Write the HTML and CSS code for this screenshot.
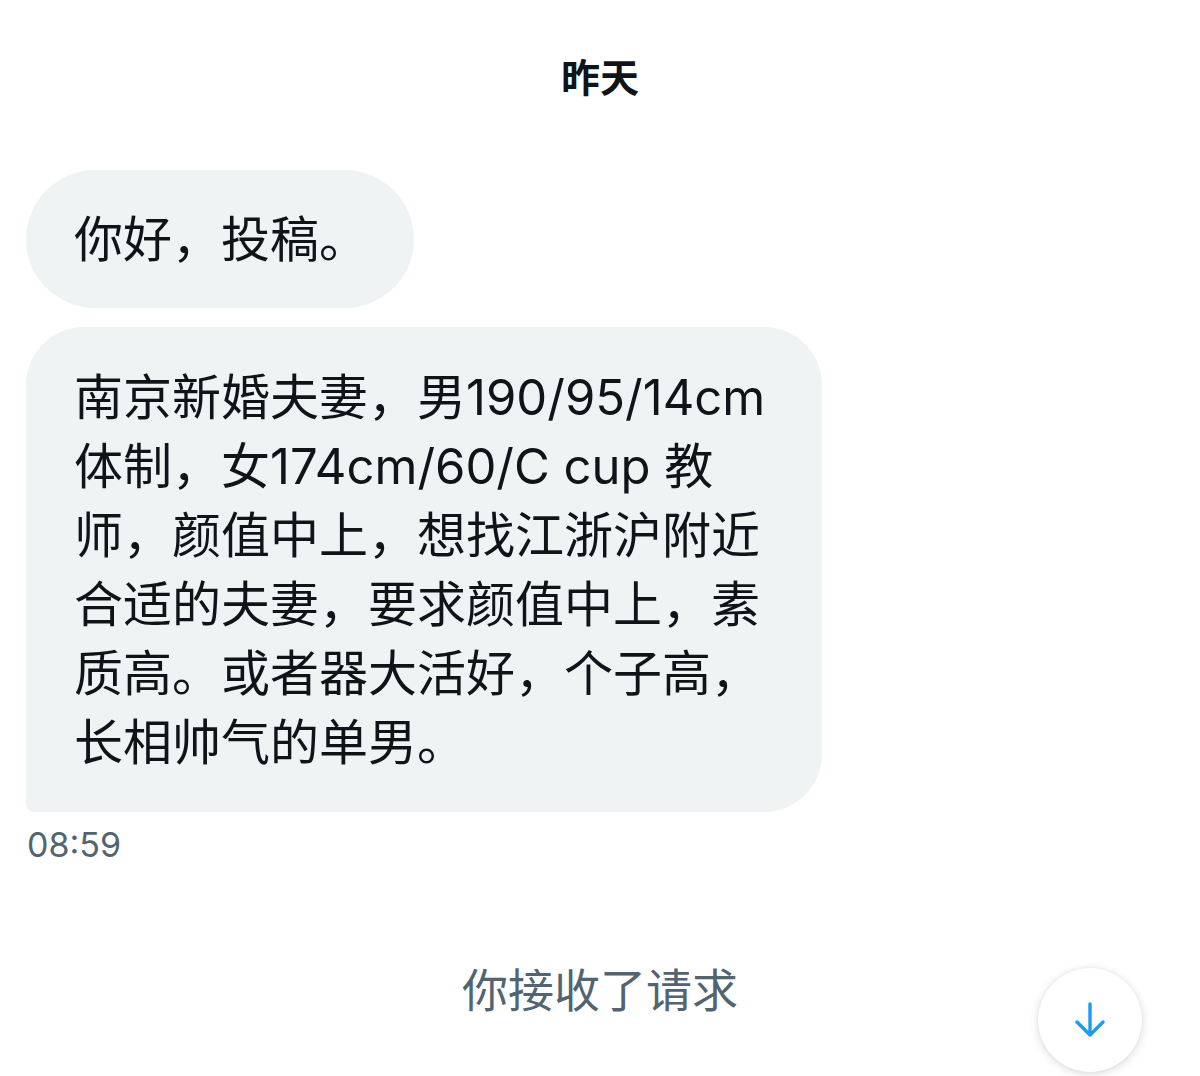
FILE: index.html
```html
<!DOCTYPE html>
<html>
    <head>
        <title>私信</title>
        <meta charset="UTF-8">
        <meta name="viewport" content="width=device-width, initial-scale=1.0">
        <link rel="stylesheet" href="styles.css">
    </head>
    <body>
        <div class="chat">
            <div class="day">昨天</div>

            <div class="thread">
                <div class="bubble short">你好，投稿。</div>
                <div class="bubble long">南京新婚夫妻，男190/95/14cm<br>体制，女174cm/60/C cup 教<br>师，颜值中上，想找江浙沪附近<br>合适的夫妻，要求颜值中上，素<br>质高。或者器大活好，个子高，<br>长相帅气的单男。</div>
                <div class="time">08:59</div>
            </div>

            <div class="notice">你接收了请求</div>
        </div>

        <button class="scroll-down">
            <svg width="34" height="38" viewBox="0 0 34 38">
                <path d="M17 3 V34 M4 21 L17 34 L30 21" fill="none" stroke="#1d9bf0" stroke-width="3.4" stroke-linecap="round" stroke-linejoin="round"/>
            </svg>
        </button>
    </body>
</html>
```

FILE: styles.css
```css
html,body{margin:0; padding:0; background:#fff;}

body{
    font-family:"Inter","Noto Sans CJK SC",sans-serif;
    color:#0f1419;
    height:1076px;
    overflow:hidden;
    position:relative;
}

.chat{
    display:flex;
    flex-direction:column;
    padding:0 26px;
}

.day{
    text-align:center;
    font-size:39px;
    font-weight:bold;
    line-height:46px;
    padding-top:52px;
    font-family:"Noto Sans CJK SC",sans-serif;
}

.thread{
    display:flex;
    flex-direction:column;
    align-items:flex-start;
    gap:19px;
    margin-top:72px;
}

.bubble{
    background:#eff3f4;
    font-size:49px;
    line-height:69px;
    box-sizing:border-box;
}

.short{
    width:388px;
    height:138px;
    padding:35px 0 0 48px;
    border-radius:69px;
}

.long{
    width:796px;
    padding:36px 0 35px 48px;
    border-radius:58px 58px 58px 8px;
    white-space:nowrap;
}

.time{
    margin-top:-6px;
    padding-left:1px;
    font-size:34px;
    line-height:40px;
    color:#536471;
}

.notice{
    text-align:center;
    font-size:46px;
    line-height:60px;
    margin-top:92px;
    color:#536471;
    font-family:"Noto Sans CJK SC",sans-serif;
}

.scroll-down{
    position:absolute;
    left:1038px;
    top:968px;
    width:104px;
    height:104px;
    border:none;
    border-radius:50%;
    background:#fff;
    box-shadow:0 2px 10px rgba(0,0,0,0.14), 0 0 3px rgba(0,0,0,0.06);
    display:flex;
    align-items:center;
    justify-content:center;
    padding:0;
}
```
